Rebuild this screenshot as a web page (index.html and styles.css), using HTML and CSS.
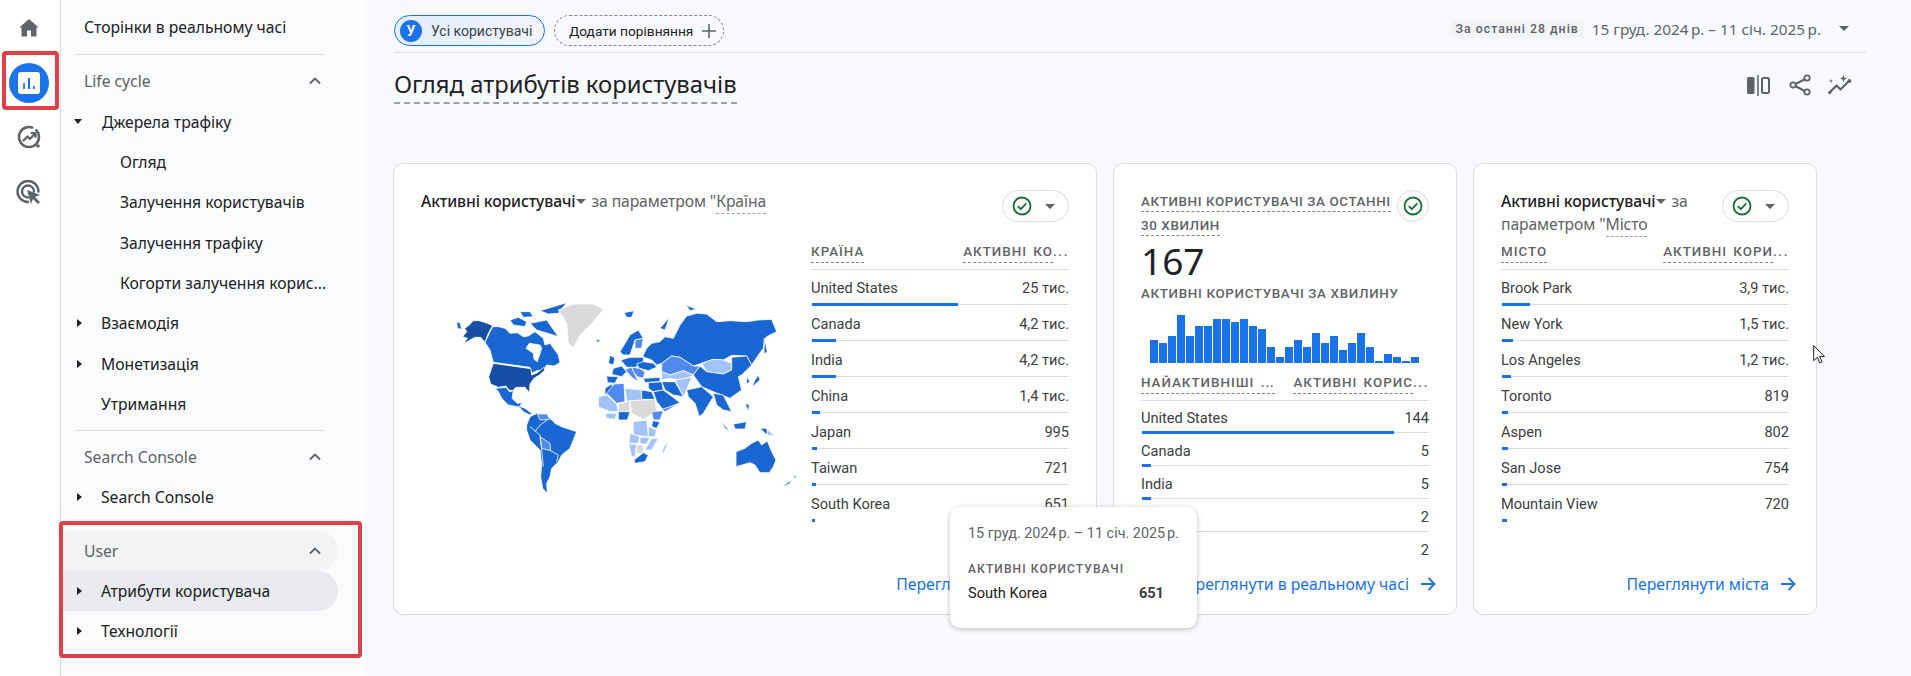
FILE: index.html
```html
<!DOCTYPE html>
<html lang="uk">
<head>
<meta charset="utf-8">
<title>Огляд атрибутів користувачів</title>
<link rel="stylesheet" href="styles.css">
</head>
<body>
<div class="app">
  <nav class="rail">
    <a class="rail-btn"><svg class="i24" viewBox="0 0 24 24"><path class="f-g" d="M10 20.500v-6h4v6h5.500v-9h2.200L12 3 2.300 11.500h2.200v9z"/></svg></a>
    <a class="rail-btn active"><span class="round"><svg class="i22" viewBox="0 0 22 22"><rect width="22" height="22" rx="3" fill="#fff"/><rect x="5" y="11" width="2" height="6" fill="#4285f4"/><rect x="10" y="6" width="2" height="11" fill="#1a73e8"/><rect x="15" y="14" width="2" height="3" fill="#4285f4"/></svg></span></a>
    <a class="rail-btn"><svg class="i26" viewBox="0 0 26 26"><circle cx="13" cy="13" r="10" class="s-g" stroke-width="2.600" stroke-dasharray="50 5"/><path class="s-g" stroke-width="2.200" d="M7.500 16.500l4-4 2.500 2.500 5-5.500M15.500 9h4v4"/><circle cx="22" cy="22" r="1.800" class="f-g"/></svg></a>
    <a class="rail-btn"><svg class="i26" viewBox="0 0 26 26"><path class="s-g" stroke-width="2.400" d="M12 23a10.500 10.500 0 1 1 10.500-10.500M12 18.500a6 6 0 1 1 6-6"/><path class="f-g" d="M11 11l13 5-5 2 5 5-2 2-5-5-2 5z"/></svg></a>
  </nav>

  <aside class="side">
    <div class="side-row plain">Сторінки в реальному часі</div>
    <hr class="rule">
    <div class="side-row head"><span>Life cycle</span><svg class="chev" viewBox="0 0 12 8"><path d="M1 6.500l5-5 5 5"/></svg></div>
    <div class="side-row item"><i class="caret down"></i>Джерела трафіку</div>
    <div class="side-row sub">Огляд</div>
    <div class="side-row sub">Залучення користувачів</div>
    <div class="side-row sub">Залучення трафіку</div>
    <div class="side-row sub">Когорти залучення корис...</div>
    <div class="side-row item"><i class="caret"></i>Взаємодія</div>
    <div class="side-row item"><i class="caret"></i>Монетизація</div>
    <div class="side-row item"><i class="caret none"></i>Утримання</div>
    <hr class="rule low">
    <div class="side-row head"><span>Search Console</span><svg class="chev" viewBox="0 0 12 8"><path d="M1 6.500l5-5 5 5"/></svg></div>
    <div class="side-row item"><i class="caret"></i>Search Console</div>
    <div class="side-row head hover"><span>User</span><svg class="chev" viewBox="0 0 12 8"><path d="M1 6.500l5-5 5 5"/></svg></div>
    <div class="side-row item selected"><i class="caret"></i>Атрибути користувача</div>
    <div class="side-row item"><i class="caret"></i>Технології</div>
  </aside>

  <main class="main">
    <header class="top">
      <div class="chips">
        <span class="chip on"><b class="ava">У</b>Усі користувачі</span>
        <span class="chip add">Додати порівняння<svg class="plus" viewBox="0 0 14 14"><path d="M7 0v14M0 7h14"/></svg></span>
      </div>
      <div class="range">
        <span class="tag">За останні 28 днів</span>
        <span class="dates">15 груд. 2024&#8239;р. – 11 січ. 2025&#8239;р.</span>
        <i class="tri dark"></i>
      </div>
    </header>

    <div class="title-row">
      <h1 class="title">Огляд атрибутів користувачів</h1>
      <div class="tools">
        <svg class="tool-a" viewBox="0 0 23 21"><rect x="0" y="2" width="7.500" height="17" rx="1.500" class="f-g"/><path class="s-g" stroke-width="1.500" d="M11 0v21"/><rect x="15" y="3" width="7" height="15" rx="1.500" class="s-g" stroke-width="2"/></svg>
        <svg class="tool-b" viewBox="0 0 22 22"><path class="s-g" stroke-width="2.200" d="M17.500 4.500L4.500 11l13 7"/><circle cx="18" cy="4" r="2.700" class="s-g2"/><circle cx="4" cy="11" r="2.700" class="s-g2"/><circle cx="18" cy="18" r="2.700" class="s-g2"/></svg>
        <svg class="tool-c" viewBox="0 0 25 20"><path class="s-g" stroke-width="2.200" d="M1.500 17.500l7-7 4 4 8-8"/><circle cx="21.500" cy="6" r="1.900" class="f-g"/><circle cx="1.800" cy="17.500" r="1.500" class="f-g"/><path class="f-g" d="M15.500 0l1 2.500 2.500 1-2.500 1-1 2.500-1-2.500-2.500-1 2.500-1zM3 4l.6 1.400L5 6l-1.400.6L3 8l-.6-1.400L1 6l1.400-.6z"/></svg>
      </div>
    </div>

    <section class="cards">
      <article class="card wide">
        <div class="card-head">
          <div class="card-title"><b>Активні користувачі</b><i class="tri"></i> <span class="gap">за параметром "<u>Країна</u></span></div>
          <span class="pill"><svg class="check" viewBox="0 0 20 20"><circle cx="10" cy="10" r="8.500"/><path d="M5.800 10.200l3 3 5.500-5.800"/></svg><i class="tri"></i></span>
        </div>
        <div class="card-body">
          <svg class="map" viewBox="0 0 1140 720">
            <g class="land">
              <polygon class="c1" points="130,122 148,122 172,130 188,137 175,160 165,187 152,172 135,172 120,180 100,192 112,175 98,170 110,155 104,145 118,135"/>
              <polygon class="c2" points="80,125 90,128 95,148 82,145"/>
              <polygon class="c2" points="188,140 205,140 225,145 240,160 262,158 280,170 295,168 315,155 340,175 345,195 360,190 385,225 390,248 372,258 350,255 340,270 320,272 305,280 300,262 190,247 180,210 165,187"/>
              <polygon class="hole" points="288,205 298,190 330,195 335,205 322,245 312,238 310,220"/>
              <polygon class="c2" points="240,120 265,112 290,125 285,140 250,135"/>
              <polygon class="c2" points="270,95 300,95 310,110 280,112"/>
              <polygon class="c2" points="330,92 410,68 385,100 355,102"/>
              <polygon class="c2" points="300,130 350,120 385,170 360,162 320,150"/>
              <polygon class="g" points="385,90 430,72 490,72 520,88 490,125 450,165 430,203 415,190 410,130"/>
              <polygon class="c1" points="190,250 303,266 305,285 322,278 342,262 345,270 328,285 312,295 300,312 298,338 285,322 258,322 248,332 236,330 228,318 205,322 182,312 176,290"/>
              <polygon class="c2" points="196,325 228,322 238,335 250,332 246,355 262,370 275,368 270,380 280,392 262,380 235,375 215,355 205,335"/>
              <polygon class="c2" points="265,378 285,385 305,400 300,405 280,395"/>
              <polygon class="c2" points="300,410 320,400 350,405 375,430 395,440 440,455 432,475 420,505 395,525 385,545 365,565 360,590 350,610 352,640 338,625 332,590 335,555 330,510 300,480 290,450 290,435"/>
              <polygon class="c3" points="330,470 360,490 362,512 335,505"/>
              <polygon class="c3" points="322,402 352,402 358,418 330,420"/>
              <polyline class="line" points="300,440 330,465 335,510 340,560"/>
              <polyline class="line" points="352,420 330,435 315,455"/>
              <polyline class="line" points="362,512 385,525 380,545"/>
              <polygon class="c3" points="495,180 512,178 505,188"/>
              <polygon class="c2" points="582,98 612,92 605,112 590,112"/>
              <polygon class="c2" points="690,145 718,112 705,150"/>
              <polygon class="c2" points="768,76 800,88 780,92"/>
              <polygon class="c2" points="570,215 600,165 625,150 640,175 615,180 600,225 580,225"/>
              <polygon class="c3" points="615,180 640,175 635,205 615,205"/>
              <polygon class="c2" points="540,225 555,235 550,255 535,250"/>
              <polygon class="c2" points="550,265 575,258 590,275 575,290 545,283"/>
              <polygon class="c2" points="530,288 565,290 555,310 532,308"/>
              <polygon class="c2" points="572,240 600,232 640,232 640,250 615,262 590,262"/>
              <polygon class="c2" points="620,252 640,245 672,250 680,262 655,272 628,265"/>
              <polygon class="c3" points="585,268 605,262 612,278 625,305 605,292"/>
              <polygon class="c3" points="605,262 628,265 645,275 640,295 622,290 612,278"/>
              <polygon class="c2" points="640,295 690,292 690,305 645,308"/>
              <polygon class="c2" points="638,230 650,205 665,190 690,185 705,170 730,175 750,135 770,108 800,100 830,102 860,125 900,122 950,125 985,120 1025,118 1040,155 1010,170 1003,180 1000,205 985,225 965,255 950,228 905,226 880,240 850,238 815,250 790,258 750,232 725,228 695,250 680,255 665,240"/>
              <polygon class="c3" points="695,250 725,228 750,232 790,258 810,258 790,285 760,272 720,285 695,275"/>
              <polygon class="c4" points="815,250 850,238 880,240 905,250 905,270 880,282 830,275"/>
              <polygon class="c2" points="790,285 810,258 830,275 880,282 905,270 905,232 950,228 965,255 935,285 925,290 935,330 900,355 850,335 815,320"/>
              <polygon class="c4" points="695,275 720,285 760,272 790,285 770,295 745,300 720,295 695,300"/>
              <polygon class="c4" points="735,300 785,292 770,330 760,350 745,320"/>
              <polygon class="c2" points="655,308 695,305 700,330 670,335 655,325"/>
              <polygon class="c2" points="695,305 735,305 760,350 730,345 705,330"/>
              <polygon class="c2" points="670,335 700,330 720,345 750,368 700,390 680,365"/>
              <polygon class="c3" points="695,388 745,372 705,395"/>
              <polygon class="c2" points="770,330 815,320 850,350 820,400 808,410 795,370 775,350"/>
              <polygon class="c2" points="850,340 880,345 905,395 880,390 860,375"/>
              <polygon class="c2" points="870,420 900,455 885,445"/>
              <polygon class="c2" points="910,432 950,425 945,447 915,447"/>
              <polygon class="c2" points="945,370 958,375 955,395"/>
              <polygon class="c2" points="990,445 1010,445 1015,465 1005,460"/>
              <polygon class="c4" points="1012,448 1035,468 1012,465"/>
              <polygon class="c2" points="975,300 985,285 990,300 965,322"/>
              <polygon class="c2" points="950,290 960,305 950,312"/>
              <polygon class="c2" points="1003,175 1012,215 1002,222"/>
              <polygon class="c2" points="918,515 945,505 965,490 985,480 995,495 1012,483 1025,515 1038,540 1030,560 1018,578 990,578 975,555 960,548 918,560"/>
              <polygon class="c2" points="1055,620 1085,600 1078,612"/>
              <polygon class="c2" points="1090,588 1100,586 1095,596"/>
              <polygon class="c2" points="525,325 545,312 552,330 525,345"/>
              <polygon class="c3" points="552,312 582,310 585,365 560,370 530,340"/>
              <polygon class="c4" points="585,325 635,330 635,360 590,365"/>
              <polygon class="c2" points="635,330 665,335 675,358 635,358"/>
              <polygon class="c4" points="505,350 530,345 560,372 565,395 540,395 505,380"/>
              <polygon class="g" points="565,372 600,362 600,395 565,395"/>
              <polygon class="g" points="600,362 675,358 680,395 640,418 605,400"/>
              <polygon class="c2" points="565,395 600,395 592,420 565,420"/>
              <polygon class="c4" points="525,400 560,400 555,418 530,415"/>
              <polygon class="c3" points="665,395 700,392 690,420 670,420"/>
              <polygon class="c2" points="668,422 690,425 680,445 665,440"/>
              <polygon class="c4" points="610,425 650,420 655,470 610,465"/>
              <polygon class="c4" points="600,460 630,470 625,490 597,490"/>
              <polygon class="c4" points="655,440 680,450 675,470 655,470"/>
              <polygon class="c4" points="597,492 620,492 615,530 605,530"/>
              <polygon class="g" points="618,495 640,495 640,520 620,520"/>
              <polygon class="c4" points="630,472 660,472 650,492 630,492"/>
              <polygon class="c4" points="665,475 685,475 665,510 645,510"/>
              <polygon class="c2" points="612,540 640,518 655,525 645,545 615,550"/>
              <polygon class="c4" points="695,515 712,480 710,500 700,520"/>
            </g>
          </svg>
          <div class="table t-wide">
            <div class="thead"><span class="th"><u>КРАЇНА</u></span><span class="th"><u>АКТИВНІ КО</u><em class="el">...</em></span></div>
            <div class="tr"><div class="td"><span>United States</span><span>25 тис.</span></div><div class="track"><div class="fill" style="width:146px"></div></div></div>
            <div class="tr"><div class="td"><span>Canada</span><span>4,2 тис.</span></div><div class="track"><div class="fill" style="width:24px"></div></div></div>
            <div class="tr"><div class="td"><span>India</span><span>4,2 тис.</span></div><div class="track"><div class="fill" style="width:24px"></div></div></div>
            <div class="tr"><div class="td"><span>China</span><span>1,4 тис.</span></div><div class="track"><div class="fill" style="width:8px"></div></div></div>
            <div class="tr"><div class="td"><span>Japan</span><span>995</span></div><div class="track"><div class="fill" style="width:5px"></div></div></div>
            <div class="tr"><div class="td"><span>Taiwan</span><span>721</span></div><div class="track"><div class="fill" style="width:4px"></div></div></div>
            <div class="tr last"><div class="td"><span>South Korea</span><span>651</span></div><div class="track"><div class="fill" style="width:3px"></div></div></div>
          </div>
        </div>
        <a class="more">Переглянути країни<svg class="arrow" viewBox="0 0 16 14"><path d="M1 7h13M8.500 1l6 6-6 6"/></svg></a>
      </article>

      <article class="card mid">
        <div class="card-head rt">
          <div class="caps-title"><u>АКТИВНІ КОРИСТУВАЧІ ЗА ОСТАННІ</u><br><u>30 ХВИЛИН</u></div>
          <span class="pill solo"><svg class="check" viewBox="0 0 20 20"><circle cx="10" cy="10" r="8.500"/><path d="M5.800 10.200l3 3 5.500-5.800"/></svg></span>
        </div>
        <div class="big">167</div>
        <div class="caps-label">АКТИВНІ КОРИСТУВАЧІ ЗА ХВИЛИНУ</div>
        <div class="spark">
          <i style="height:23px"></i><i style="height:20px"></i><i style="height:27px"></i><i style="height:48px"></i><i style="height:27px"></i><i style="height:37px"></i><i style="height:37px"></i><i style="height:44px"></i><i style="height:44px"></i><i style="height:41px"></i><i style="height:44px"></i><i style="height:37px"></i><i style="height:34px"></i><i style="height:16px"></i><i style="height:6px"></i><i style="height:16px"></i><i style="height:23px"></i><i style="height:16px"></i><i style="height:30px"></i><i style="height:20px"></i><i style="height:27px"></i><i style="height:13px"></i><i style="height:20px"></i><i style="height:30px"></i><i style="height:16px"></i><i style="height:2px"></i><i style="height:9px"></i><i style="height:6px"></i><i style="height:2px"></i><i style="height:6px"></i>
        </div>
        <div class="table t-mid">
          <div class="thead"><span class="th"><u>НАЙАКТИВНІШІ ...</u></span><span class="th"><u>АКТИВНІ КОРИС</u><em class="el">...</em></span></div>
          <div class="tr"><div class="td"><span>United States</span><span>144</span></div><div class="track"><div class="fill" style="width:252px"></div></div></div>
          <div class="tr"><div class="td"><span>Canada</span><span>5</span></div><div class="track"><div class="fill" style="width:9px"></div></div></div>
          <div class="tr"><div class="td"><span>India</span><span>5</span></div><div class="track"><div class="fill" style="width:9px"></div></div></div>
          <div class="tr"><div class="td"><span></span><span>2</span></div><div class="track"><div class="fill" style="width:3px"></div></div></div>
          <div class="tr last"><div class="td"><span></span><span>2</span></div></div>
        </div>
        <a class="more">Переглянути в реальному часі<svg class="arrow" viewBox="0 0 16 14"><path d="M1 7h13M8.500 1l6 6-6 6"/></svg></a>
      </article>

      <article class="card narrow">
        <div class="card-head tall">
          <div class="card-title"><b>Активні користувачі</b><i class="tri"></i> <span class="gap">за<br>параметром "<u>Місто</u></span></div>
          <span class="pill"><svg class="check" viewBox="0 0 20 20"><circle cx="10" cy="10" r="8.500"/><path d="M5.800 10.200l3 3 5.500-5.800"/></svg><i class="tri"></i></span>
        </div>
        <div class="table">
          <div class="thead"><span class="th"><u>МІСТО</u></span><span class="th"><u>АКТИВНІ КОРИ</u><em class="el">...</em></span></div>
          <div class="tr"><div class="td"><span>Brook Park</span><span>3,9 тис.</span></div><div class="track"><div class="fill" style="width:28px"></div></div></div>
          <div class="tr"><div class="td"><span>New York</span><span>1,5 тис.</span></div><div class="track"><div class="fill" style="width:11px"></div></div></div>
          <div class="tr"><div class="td"><span>Los Angeles</span><span>1,2 тис.</span></div><div class="track"><div class="fill" style="width:9px"></div></div></div>
          <div class="tr"><div class="td"><span>Toronto</span><span>819</span></div><div class="track"><div class="fill" style="width:6px"></div></div></div>
          <div class="tr"><div class="td"><span>Aspen</span><span>802</span></div><div class="track"><div class="fill" style="width:6px"></div></div></div>
          <div class="tr"><div class="td"><span>San Jose</span><span>754</span></div><div class="track"><div class="fill" style="width:5px"></div></div></div>
          <div class="tr last"><div class="td"><span>Mountain View</span><span>720</span></div><div class="track"><div class="fill" style="width:5px"></div></div></div>
        </div>
        <a class="more">Переглянути міста<svg class="arrow" viewBox="0 0 16 14"><path d="M1 7h13M8.500 1l6 6-6 6"/></svg></a>
      </article>
    </section>
  </main>
</div>

<div class="mark mark-rail"></div>
<div class="mark mark-side"></div>

<div class="tooltip">
  <div class="tip-date">15 груд. 2024&#8239;р. – 11 січ. 2025&#8239;р.</div>
  <div class="tip-head">АКТИВНІ КОРИСТУВАЧІ</div>
  <div class="tip-row"><span>South Korea</span><b>651</b></div>
</div>

<svg class="cursor" viewBox="0 0 12 19"><path d="M.7.700v15l3.600-3.400 2.500 5.600 2.300-1-2.500-5.500h4.900z"/></svg>
</body>
</html>
```

FILE: styles.css
```css
* { box-sizing: border-box; }
html, body { margin: 0; height: 100%; }
body {
  width: 1911px;
  height: 676px;
  overflow: hidden;
  position: relative;
  background: #f8f9fd;
  font-family: "Roboto", "Liberation Sans", sans-serif;
  color: #202124;
}
.app { display: flex; height: 676px; }

/* shared svg colours */
.f-g { fill: #5f6368; }
.s-g { fill: none; stroke: #5f6368; stroke-linecap: round; stroke-linejoin: round; }
.s-g2 { stroke: #5f6368; stroke-width: 1.800; fill: #f8f9fd; }

/* rail */
.rail {
  width: 61px;
  flex: none;
  background: #fff;
  border-right: 1px solid #dadce0;
  display: flex;
  flex-direction: column;
  padding: 1px 2px 0 0;
}
.rail-btn { height: 54.600px; display: flex; align-items: center; justify-content: center; }
.round { width: 40px; height: 40px; border-radius: 50%; background: #1a73e8; display: flex; align-items: center; justify-content: center; }
.i24 { width: 24px; height: 24px; }
.i22 { width: 22px; height: 22px; }
.i26 { width: 26px; height: 26px; }

/* side navigation */
.side {
  width: 304px;
  flex: none;
  background: #fafbfd;
  font-family: "Noto Sans", sans-serif;
  font-size: 15.700px;
  padding-top: 7px;
  padding-right: 27px;
}
.side-row { height: 40.300px; display: flex; align-items: center; color: #202124; white-space: nowrap; }
.plain { padding-left: 23px; }
.head { padding: 0 17px 0 23px; justify-content: space-between; color: #5f6368; }
.head span { flex: 1; }
.chev { width: 12px; height: 8px; fill: none; stroke: #5f6368; stroke-width: 1.800; }
.item { padding-left: 13px; }
.sub { padding-left: 59px; }
.rule { border: 0; border-top: 1px solid #dadce0; margin: 7px 0 6px 14px; width: 249px; }
.rule.low { margin-top: 6px; }
.caret { width: 0; height: 0; margin-right: 19px; border-style: solid; border-width: 4px 0 4px 5px; border-color: transparent transparent transparent #202124; margin-left: 3px; }
.caret.down { border-width: 5px 4px 0 4px; border-color: #202124 transparent transparent transparent; margin-left: 0; margin-right: 20px; }
.caret.none { border-color: transparent; }
.hover { background: #f1f3f4; margin-top: 13px; border-radius: 0 20px 20px 0; }
.selected { background: #e8eaed; border-radius: 0 20px 20px 0; }

/* main */
.main { flex: 1; padding-left: 29px; padding-right: 45px; min-width: 0; }
.top {
  height: 53px;
  border-bottom: 1px solid #dadce0;
  display: flex;
  justify-content: space-between;
  padding: 15px 0 0;
}
.chips { display: flex; gap: 9px; }
.chip { height: 31px; border-radius: 16px; display: flex; align-items: center; font-size: 14px; white-space: nowrap; }
.chip.on { width: 151px; border: 1.500px solid #1a73e8; background: linear-gradient(90deg, #e3edfd, #f1f5fd); padding-left: 5px; color: #3c4043; }
.ava { width: 22px; height: 22px; border-radius: 50%; background: #1a73e8; color: #fff; font-size: 14px; display: flex; align-items: center; justify-content: center; margin-right: 9px; }
.chip.add { width: 170px; border: 1px dashed #80868b; padding-left: 14px; font-size: 13.700px; }
.plus { width: 14px; height: 14px; margin-left: 9px; stroke: #5f6368; stroke-width: 1.600; fill: none; }
.range { display: flex; align-items: flex-start; padding-right: 17px; }
.tag { height: 18px; margin-top: 5px; background: #f1f3f4; color: #5f6368; font-size: 12.300px; font-weight: 500; letter-spacing: 1px; padding: 0 5px; line-height: 18px; white-space: nowrap; }
.dates { margin-left: 8px; font-family: "Noto Sans", sans-serif; font-size: 15.300px; color: #5f6368; line-height: 28px; white-space: nowrap; }
.tri { display: inline-block; width: 0; height: 0; border-style: solid; border-width: 5px 5px 0; border-color: #5f6368 transparent transparent; vertical-align: middle; }
.tri.dark { margin: 11px 0 0 18px; }

.title-row { display: flex; justify-content: space-between; height: 110px; }
.title { margin: 14px 0 0; height: 37px; font-family: "Noto Sans", sans-serif; font-weight: 400; font-size: 23.800px; line-height: 34px; border-bottom: 2px dashed #9aa0a6; }
.tools { display: flex; gap: 17px; align-items: center; height: 36px; margin-top: 14px; padding-right: 13px; }
.tool-a { width: 23px; height: 21px; margin-right: 2px; }
.tool-b { width: 22px; height: 22px; }
.tool-c { width: 25px; height: 20px; }

/* cards */
.cards { display: flex; gap: 16px; margin-left: -1px; }
.card {
  height: 452px;
  background: #fff;
  border: 1px solid #dadce0;
  border-radius: 10px;
  padding: 26px 27px 0;
  display: flex;
  flex-direction: column;
  position: relative;
  overflow: hidden;
}
.wide { width: 704px; }
.mid { width: 344px; }
.narrow { width: 344px; }
.card-head { display: flex; justify-content: space-between; align-items: flex-start; height: 54px; flex: none; }
.card-head.rt { height: 48px; }
.card-head.tall { height: 54px; }
.card-title { font-family: "Noto Sans", sans-serif; font-size: 15.700px; line-height: 22.500px; color: #5f6368; white-space: nowrap; letter-spacing: -.1px; }
.card-title b { font-weight: 500; color: #202124; }
.card-title .tri { margin: 0 0 2px 0; }
.gap { margin-left: 2px; }
.card-title u { text-decoration: none; border-bottom: 1px dashed #9aa0a6; padding-bottom: 1px; }
.pill { width: 67px; height: 32px; border: 1px solid #dadce0; border-radius: 16px; display: flex; align-items: center; justify-content: space-between; padding: 0 13px 0 9px; flex: none; }
.pill.solo { width: 32px; padding: 0; justify-content: center; border-radius: 50%; }
.check { width: 20px; height: 20px; fill: none; stroke: #137333; stroke-width: 1.800; }
.card-body { display: flex; flex: none; }
.map { width: 380px; height: 240px; margin: 36px 0 0 9px; flex: none; }
.land polygon { stroke: #fff; stroke-width: 2.400; stroke-linejoin: round; }
.land .line { fill: none; stroke: #fff; stroke-width: 2.400; }
.c1 { fill: #174ea6; }
.c2 { fill: #1967d2; }
.c3 { fill: #5089f0; }
.c4 { fill: #a1c2fa; }
.g { fill: #dadada; }
.hole { fill: #fff; }

/* tables */
.table { flex: none; }
.t-wide { width: 258px; margin-left: auto; margin-right: 0; }
.thead { display: flex; justify-content: space-between; height: 26px; border-bottom: 1px solid #dadce0; font-size: 13.400px; font-weight: 500; letter-spacing: 1px; word-spacing: 2px; color: #5f6368; white-space: nowrap; }
.th u { text-decoration: none; border-bottom: 1px dashed #80868b; padding-bottom: 3px; }
.el { font-style: normal; letter-spacing: 1.600px; }
.tr { height: 36px; padding-top: 8px; }
.td { display: flex; justify-content: space-between; font-size: 14.600px; color: #3c4043; line-height: 20px; height: 25px; }
.track { height: 3px; background: linear-gradient(#0000 1px, #dadce0 1px, #dadce0 2px, #0000 2px); }
.last .track { background: none; }
.fill { height: 3px; margin-left: 1px; background: #1a73e8; }

.caps-title { font-size: 13.400px; font-weight: 500; letter-spacing: .6px; color: #5f6368; line-height: 24px; white-space: nowrap; }
.caps-title u { text-decoration: none; border-bottom: 1px dashed #80868b; padding-bottom: 2px; }
.big { font-family: "Noto Sans", sans-serif; font-size: 37px; line-height: 40px; height: 41px; margin-top: 3px; }
.caps-label { font-size: 13.400px; font-weight: 500; letter-spacing: .65px; color: #5f6368; line-height: 20px; white-space: nowrap; margin-top: 2px; }
.spark { display: flex; align-items: flex-end; gap: 1px; height: 50px; margin: 9px 0 0 9px; }
.spark i { width: 8px; background: #1a73e8; display: block; }
.t-mid { margin-top: 12px; }
.t-mid .tr { height: 33px; padding-top: 7px; }
.t-mid .td { height: 23px; }
.t-mid .thead { height: 26px; }
.more { margin: auto 0 20px; align-self: flex-end; display: flex; align-items: center; color: #1a73e8; font-family: "Noto Sans", sans-serif; font-size: 15.800px; line-height: 20px; white-space: nowrap; margin-right: -7px; }
.arrow { width: 16px; height: 14px; margin-left: 11px; fill: none; stroke: #1a73e8; stroke-width: 1.800; }

/* overlays */
.mark { position: absolute; border: 4px solid #e04046; border-radius: 4px; pointer-events: none; }
.mark-rail { left: 2px; top: 51px; width: 57px; height: 59px; }
.mark-side { left: 59px; top: 521px; width: 303px; height: 137px; }
.tooltip {
  position: absolute;
  left: 950px;
  top: 507px;
  width: 247px;
  height: 121px;
  background: #fff;
  border-radius: 10px;
  box-shadow: 0 1px 5px rgba(60,64,67,.35);
  padding: 17px 18px;
}
.tip-date { font-size: 14.400px; color: #5f6368; line-height: 20px; white-space: nowrap; }
.tip-head { margin-top: 17px; font-size: 12px; font-weight: 500; letter-spacing: 1.100px; color: #5f6368; line-height: 16px; }
.tip-row { display: flex; justify-content: space-between; padding-right: 15px; margin-top: 6px; font-size: 14.600px; line-height: 20px; color: #202124; }
.tip-row b { font-weight: 700; color: #3c4043; }
.cursor { position: absolute; left: 1813px; top: 345px; width: 12px; height: 19px; fill: #fff; stroke: #202124; stroke-width: 1; }
```
